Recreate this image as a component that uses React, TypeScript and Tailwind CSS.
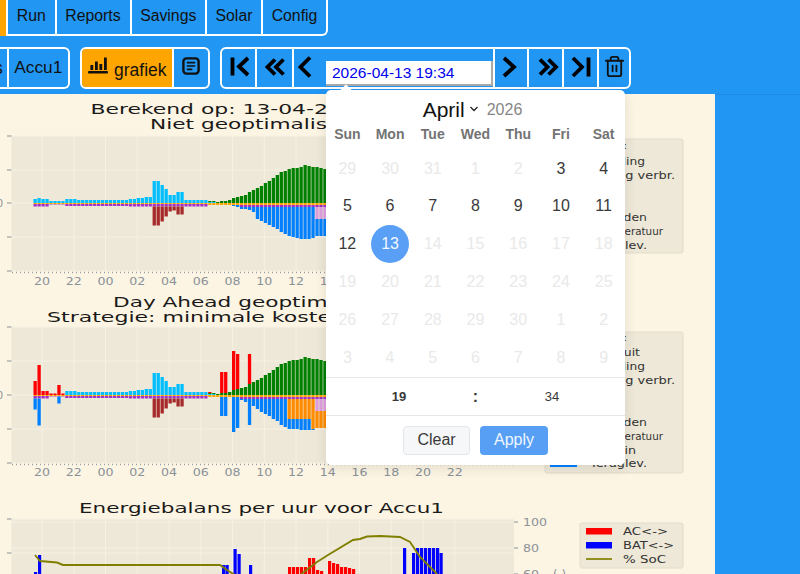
import React from 'react'
import { Trash2 } from 'lucide-react'

const HOURS = ['20', '22', '00', '02', '04', '06', '08', '10', '12', '14', '16', '18', '20', '22']
const CYAN = '#00bfff'
const GREEN = '#008000'
const ORANGE = '#ff8c00'
const YELLOW = '#ffa500'
const PURPLE = '#a030c8'
const BROWN = '#a52a2a'
const PLUM = '#dda0dd'
const BLUE = '#0080ff'
const RED = '#ff0000'

const barX = (i: number) => 33.5 + 3.97 * i

const cyan = [4, 5, 4, 4, 2, 2, 2, 2, 4, 4, 4, 3, 3, 3, 3, 3, 3, 3, 3, 3, 3, 3, 3, 3, 4, 4, 5, 5, 6, 6, 22, 22, 18, 14, 8, 8, 11, 11, 3, 3, 3, 3, 3, 3, 1, 1]
const green: Record<number, number> = { 44: 1, 45: 1, 46: 1, 47: 2, 48: 2, 49: 3, 50: 5, 51: 6, 52: 7, 53: 8, 54: 11, 55: 13, 56: 15, 57: 17, 58: 20, 59: 22, 60: 25, 61: 28, 62: 31, 63: 32, 64: 34, 65: 35, 66: 35, 67: 36, 68: 38, 69: 37, 70: 36, 71: 36, 72: 35, 73: 34 }
const brown: Record<number, number> = { 30: 19, 31: 19, 32: 15, 33: 10, 34: 5, 35: 4, 36: 8, 37: 8 }
const blue1: Record<number, number> = { 50: 1, 51: 2, 52: 2, 53: 2, 54: 3, 55: 5, 56: 12, 57: 14, 58: 16, 59: 18, 60: 20, 61: 22, 62: 25, 63: 27, 64: 29, 65: 30, 66: 31, 67: 32, 68: 32, 69: 32, 70: 31, 71: 17, 72: 17, 73: 17 }

const redTop: Record<number, number> = { 0: 14, 1: 30, 2: 4, 3: 4, 4: 1.5, 5: 1.5, 6: 10, 7: 1.5, 44: 1, 47: 21, 48: 21, 50: 39, 51: 35, 54: 30 }
const blue2: Record<number, number> = { 0: 11, 1: 27, 6: 7, 47: 19, 48: 19, 50: 35, 51: 31, 52: 1, 53: 3, 54: 26, 55: 7, 56: 10, 57: 13, 58: 15, 59: 17, 60: 20, 61: 22, 62: 26, 63: 28, 64: 10, 65: 10, 66: 10, 67: 11, 68: 11, 69: 11, 70: 1 }
const orange2: Record<number, number> = { 64: 20, 65: 20, 66: 20, 67: 20, 68: 20, 69: 20, 70: 30, 71: 17, 72: 17, 73: 17 }

type Seg = [string, number]

function purpleAt(i: number) {
    if (i < 4) return 2.5
    if (i < 8) return 0.5
    if (i < 24) return 2
    if (i < 44) return 2.5
    if (i < 52) return 0
    return 2
}

function Stack({ i, zero, up, down }: { i: number; zero: number; up: Seg[]; down: Seg[] }) {
    let top = zero
    let bottom = zero
    return (
        <g>
            {up.map(([c, h], n) => {
                top -= h
                return <rect key={n} x={barX(i)} y={top} width={3.3} height={h} fill={c} />
            })}
            {down.map(([c, h], n) => {
                const y = bottom
                bottom += h
                return <rect key={'d' + n} x={barX(i)} y={y} width={3.3} height={h} fill={c} />
            })}
        </g>
    )
}

function Plot({ top, bottom, hLines, labelsY, labels = 14 }: { top: number; bottom: number; hLines: number[]; labelsY?: number; labels?: number }) {
    return (
        <g>
            <rect x={11.5} y={top} width={502.5} height={bottom - top} fill="#eee8d8" />
            {HOURS.map((_, n) => (
                <line key={n} x1={42 + 31.75 * n} x2={42 + 31.75 * n} y1={top} y2={bottom} stroke="#f6f1e3" strokeWidth={1} />
            ))}
            {hLines.map(y => (
                <g key={y}>
                    <line x1={11.5} x2={514} y1={y} y2={y} stroke="#f6f1e3" strokeWidth={1} />
                    <line x1={7} x2={11.5} y1={y} y2={y} stroke="#8a9199" strokeWidth={1} />
                </g>
            ))}
            {labelsY !== undefined && (
                <g>
                    <line x1={12} x2={514} y1={bottom + 1.5} y2={bottom + 1.5} stroke="#9aa0a6" strokeWidth={1.5} strokeDasharray="1 3" />
                    {HOURS.slice(0, labels).map((h, n) => (
                        <text key={n} x={34 + 31.75 * n} y={labelsY} fontSize={10} fill="#8a9199" textLength={16} lengthAdjust="spacingAndGlyphs">{h}</text>
                    ))}
                </g>
            )}
        </g>
    )
}

function Title({ x, y, len, children }: { x: number; y: number; len: number; children: string }) {
    return <text x={x} y={y} fontSize={14.5} fill="#1a1a1a" textLength={len} lengthAdjust="spacingAndGlyphs">{children}</text>
}

function LegendLine({ y, len, children, x = 590 }: { y: number; len: number; children: string; x?: number }) {
    return <text x={x} y={y + 3.5} fontSize={10} fill="#333" textLength={len} lengthAdjust="spacingAndGlyphs">{children}</text>
}

function Charts() {
    const idx = Array.from({ length: 74 }, (_, i) => i)
    return (
        <svg width={715} height={480} viewBox="0 94 715 480" className="block font-['DejaVu_Sans',sans-serif]">
            <Title x={90.5} y={114} len={349}>Berekend op: 13-04-2026 19:34</Title>
            <Title x={150} y={129} len={226}>Niet geoptimaliseerd</Title>
            <Plot top={136} bottom={271} hLines={[136, 170, 203, 237, 271]} labelsY={285} labels={10} />
            <text x={3} y={207} fontSize={10} fill="#8a9199" textAnchor="end">0</text>
            {idx.map(i => (
                <Stack
                    key={i}
                    i={i}
                    zero={203}
                    up={[[CYAN, cyan[i] ?? 0], [GREEN, green[i] ?? 0]]}
                    down={[[YELLOW, i < 44 ? 1 : 2], [PURPLE, purpleAt(i)], [PLUM, i > 70 ? 12 : 0], [BROWN, brown[i] ?? 0], [BLUE, blue1[i] ?? 0]]}
                />
            ))}
            <rect x={545} y={139} width={138} height={114} rx={2} fill="#eee8d8" stroke="#e2dccb" />
            <LegendLine y={145} len={37}>Inkoop:</LegendLine>
            <LegendLine y={161} len={55}>Oplading</LegendLine>
            <LegendLine y={175} len={85}>Lading verbr.</LegendLine>
            <LegendLine y={187} len={37}>Uit:</LegendLine>
            <LegendLine y={217} len={57}>Ontladen</LegendLine>
            <LegendLine x={597} y={231} len={66}>Temperatuur</LegendLine>
            <LegendLine y={245} len={57}>Teruglev.</LegendLine>

            <Title x={113} y={307} len={300}>Day Ahead geoptimaliseerd</Title>
            <Title x={47} y={322} len={298}>Strategie: minimale kosten</Title>
            <Plot top={327} bottom={463} hLines={[327, 361, 395, 429, 463]} labelsY={476} />
            <text x={3} y={399} fontSize={10} fill="#8a9199" textAnchor="end">0</text>
            {idx.map(i => (
                <Stack
                    key={i}
                    i={i}
                    zero={395}
                    up={[[CYAN, i >= 8 ? cyan[i] ?? 0 : 0], [GREEN, green[i] ?? 0], [RED, redTop[i] ?? 0]]}
                    down={[[YELLOW, i < 44 ? 1 : 2], [PURPLE, purpleAt(i)], [PLUM, i > 70 ? 12 : 0], [BROWN, brown[i] ?? 0], [ORANGE, orange2[i] ?? 0], [BLUE, i > 70 ? 0 : blue2[i] ?? 0]]}
                />
            ))}
            <rect x={545} y={332} width={138} height={141} rx={2} fill="#eee8d8" stroke="#e2dccb" />
            <LegendLine y={337} len={37}>Inkoop:</LegendLine>
            <LegendLine y={352} len={50}>Accu uit</LegendLine>
            <LegendLine y={366} len={55}>Oplading</LegendLine>
            <LegendLine y={380} len={85}>Lading verbr.</LegendLine>
            <LegendLine y={393} len={37}>Uit:</LegendLine>
            <LegendLine y={422} len={57}>Ontladen</LegendLine>
            <LegendLine x={597} y={436} len={66}>Temperatuur</LegendLine>
            <LegendLine y={450} len={46}>Accu in</LegendLine>
            <LegendLine y={463} len={57}>Teruglev.</LegendLine>
            <rect x={550} y={464} width={27} height={3} fill={BLUE} />

            <Title x={79} y={513} len={365}>Energiebalans per uur voor Accu1</Title>
            <Plot top={519} bottom={600} hLines={[519, 553]} />
            <line x1={11.5} x2={514} y1={548} y2={548} stroke="#f6f1e3" />
            <line x1={11.5} x2={514} y1={522} y2={522} stroke="#f6f1e3" />
            {[[34, 572], [38, 555], [222, 565], [225.5, 565], [233.5, 549], [237.5, 554], [249, 565], [403, 548], [412, 553], [416, 548], [420, 548], [424, 548], [428, 548], [432, 548], [436, 548], [439.5, 553]].map(([x, y]) => (
                <rect key={x} x={x} y={y} width={3.2} height={574 - y} fill="#0000ff" />
            ))}
            {[[288, 567], [292, 567], [296, 567], [300, 567], [304, 567], [308, 558], [312, 558], [316, 570], [320, 571], [328, 561], [332, 563], [336, 564], [340, 567], [344, 567], [348, 568], [352, 569]].map(([x, y]) => (
                <rect key={x} x={x} y={y} width={3.2} height={574 - y} fill={RED} />
            ))}
            <polyline
                points="35,555 40,561 57,562.5 63,565 220,565 227,570 235,575 300,575 317,562 328,555 353,540 360,539 367,536.5 380,536 400,537 410,542 420,557 437,574"
                fill="none"
                stroke="#808000"
                strokeWidth={1.9}
            />
            {[[522, '100'], [548, '80'], [574, '60']].map(([y, t]) => (
                <g key={t}>
                    <line x1={514} x2={518} y1={y} y2={y} stroke="#8a9199" />
                    <text x={523} y={Number(y) + 4} fontSize={10} fill="#8a9199" textLength={t === '100' ? 24 : 16} lengthAdjust="spacingAndGlyphs">{t}</text>
                </g>
            ))}
            <text x={553} y={577} fontSize={10} fill="#8a9199" textLength={13} lengthAdjust="spacingAndGlyphs">(-)</text>
            <rect x={580} y={523} width={103} height={45} rx={2} fill="#eee8d8" stroke="#e2dccb" />
            <rect x={586} y={528} width={26} height={6.5} fill={RED} />
            <rect x={586} y={542} width={26} height={6.5} fill="#0000ff" />
            <line x1={586} x2={612} y1={559} y2={559} stroke="#808000" strokeWidth={1.7} />
            <LegendLine x={623} y={531} len={45}>{'AC<->'}</LegendLine>
            <LegendLine x={623} y={545} len={51}>{'BAT<->'}</LegendLine>
            <LegendLine x={623} y={559} len={43}>% SoC</LegendLine>
        </svg>
    )
}

function ChevronIcon({ d, width = 3.8 }: { d: string; width?: number }) {
    return (
        <svg width={24} height={24} viewBox="0 0 24 24" fill="none" stroke="#000" strokeWidth={width} className="overflow-visible">
            <path d={d} />
        </svg>
    )
}

function ChartIcon() {
    return (
        <svg width={22} height={20} viewBox="0 0 22 20" fill="#111" className="mb-[4px]">
            <rect x={1} y={15} width={20} height={2.4} rx={1} />
            <rect x={3.4} y={9} width={2.8} height={5} />
            <rect x={8} y={5.5} width={2.8} height={8.5} />
            <rect x={12.4} y={8} width={2.8} height={6} />
            <rect x={17} y={1.5} width={2.8} height={12.5} />
        </svg>
    )
}

function NoteIcon() {
    return (
        <svg width={18} height={18} viewBox="0 0 18 18" fill="none" stroke="#111" strokeWidth={2.4} className="mb-[1px]">
            <rect x={1.4} y={1.4} width={15.2} height={15.2} rx={3} />
            <path d="M4.8 5.6h8.4M4.8 9h8.4M4.8 12.4h5.6" strokeWidth={1.7} />
        </svg>
    )
}

function IconButton({ children, w, sep = true }: { children: React.ReactNode; w: string; sep?: boolean }) {
    return (
        <button className={`flex h-full items-center justify-center pb-[3px] ${w} ${sep ? 'border-l-2 border-white' : ''}`}>
            {children}
        </button>
    )
}

const NAV: [string, string][] = [['Run', 'w-[48.500px]'], ['Reports', 'w-[75px]'], ['Savings', 'w-[75.500px]'], ['Solar', 'w-[56px]'], ['Config', 'w-[65px]']]
const WEEK = ['Sun', 'Mon', 'Tue', 'Wed', 'Thu', 'Fri', 'Sat']
const DAYS = [29, 30, 31, 1, 2, 3, 4, 5, 6, 7, 8, 9, 10, 11, 12, 13, 14, 15, 16, 17, 18, 19, 20, 21, 22, 23, 24, 25, 26, 27, 28, 29, 30, 1, 2, 3, 4, 5, 6, 7, 8, 9]

function DatePopup() {
    return (
        <div className="absolute left-[326px] top-[90px] flex h-[375px] w-[299px] flex-col rounded-[5px] bg-white shadow-[0_3px_13px_rgba(0,0,0,0.1)]">
            <div className="absolute left-[16px] top-[-4px] size-[8px] rotate-45 bg-white" />
            <div className="flex h-[34px] items-end justify-center pr-[6px] text-[#111]">
                <span className="text-[21px] leading-[27px]">April</span>
                <svg width={10} height={6} viewBox="0 0 10 6" fill="none" stroke="#222" strokeWidth={1.3} className="mb-[11px] ml-[4px]">
                    <path d="M1.5 1l3.5 3.5L8.500 1" />
                </svg>
                <span className="mb-[1px] ml-[8px] text-[16px] leading-[24px] text-[#868686]">2026</span>
            </div>
            <div className="mt-[1px] grid h-[20px] grid-cols-7 items-center text-center text-[14px] font-bold text-[#737373]">
                {WEEK.map(d => <span key={d}>{d}</span>)}
            </div>
            <div className="mt-[5.500px] grid grid-cols-7 text-[16px]">
                {DAYS.map((d, i) => {
                    const active = i >= 5 && i <= 14
                    const selected = i === 15
                    return (
                        <div key={i} className="flex h-[37.800px] items-center justify-center">
                            {selected ? (
                                <span className="flex size-[38px] items-center justify-center rounded-full bg-[#589ff5] text-[#f2f7ff]">{d}</span>
                            ) : (
                                <span className={active ? 'text-[#393939]' : 'text-[#e9e9e9]'}>{d}</span>
                            )}
                        </div>
                    )
                })}
            </div>
            <div className="mt-auto grid h-[40px] grid-cols-[146px_7px_146px] items-center border-y border-[#e6e6e6] pt-[1px] text-center text-[13px] text-[#393939]">
                <span className="font-bold">19</span>
                <span className="text-[16px] font-bold">:</span>
                <span>34</span>
            </div>
            <div className="flex h-[50px] justify-center gap-[10px] pt-[10px]">
                <button className="h-[29px] w-[67px] rounded-[4px] border border-[#e3e5e8] bg-[#f6f7f8] text-[16px] text-[#3a3a3a]">Clear</button>
                <button className="h-[29px] w-[68px] rounded-[4px] bg-[#569ff5] text-[16px] text-[#f0f6ff]">Apply</button>
            </div>
        </div>
    )
}

export default function App() {
    return (
        <div className="relative h-[574px] w-[800px] overflow-hidden bg-[#2196f3] font-['Liberation_Sans',Arial,sans-serif] text-[#111]">
            <div className="flex h-[36px]">
                <div className="w-[6px] bg-[#ffa500]" />
                <div className="flex rounded-br-[6px] border-b-2 border-r-2 border-white">
                    {NAV.map(([n, w]) => (
                        <button key={n} className={`flex h-full items-center justify-center border-l-2 border-white pb-[3px] text-[15.800px] ${w}`}>{n}</button>
                    ))}
                </div>
            </div>

            <div className="mt-[11px] flex h-[42px]">
                <div className="flex w-[70px] rounded-r-[6px] border-y-2 border-r-2 border-white">
                    <div className="w-[6.500px] text-[17.500px] leading-[38px]"><span className="ml-[-6px]">s</span></div>
                    <button className="flex flex-1 items-center justify-center border-l-2 border-white text-[17.300px]">Accu1</button>
                </div>
                <div className="ml-[10px] flex w-[130px] rounded-[6px] border-2 border-white">
                    <button className="flex w-[90px] items-center gap-[5px] rounded-l-[4px] bg-[#ffa500] pl-[5px]">
                        <ChartIcon />
                        <span className="mt-[5px] text-[17.500px]">grafiek</span>
                    </button>
                    <IconButton w="flex-1"><NoteIcon /></IconButton>
                </div>
                <div className="ml-[10px] flex w-[411px] rounded-[6px] border-2 border-white">
                    <IconButton w="w-[33px]" sep={false}><ChevronIcon d="M5.500 2.500V20.500M21 3l-9 8.500 9 8.500" /></IconButton>
                    <IconButton w="w-[37px]"><ChevronIcon d="M12 4.500l-7.500 7.500 7.500 7.500M20.500 4.500L13 12l7.500 7.500" /></IconButton>
                    <IconButton w="w-[34px]"><ChevronIcon d="M12 2.500L2.500 12 12 21.500" /></IconButton>
                    <div className="flex h-full w-[167px] items-end pb-[1px]">
                        <input
                            readOnly
                            value="2026-04-13 19:34"
                            className="h-[25px] w-full border-b-2 border-r-2 border-[#aaa] bg-white pl-[6px] text-[15.500px] text-[#0000ee] outline-none"
                        />
                    </div>
                    <IconButton w="w-[34px]"><ChevronIcon d="M5 3l10 9-10 9" /></IconButton>
                    <IconButton w="w-[35px]"><ChevronIcon d="M6 4.500l7.500 7.500-7.500 7.500M14.500 4.500L22 12l-7.500 7.500" /></IconButton>
                    <IconButton w="w-[35px]"><ChevronIcon d="M4 3l9 9-9 9M19.500 2.500V21.500" /></IconButton>
                    <IconButton w="flex-1"><Trash2 size={23} color="#111" strokeWidth={1.9} /></IconButton>
                </div>
            </div>

            <div className="mt-[5px] flex">
                <div className="h-[480px] w-[715px] bg-[#fdf5e3]">
                    <Charts />
                </div>
                <div className="flex-1 border-t border-[#1e8ce4]" />
            </div>

            <DatePopup />
        </div>
    )
}
